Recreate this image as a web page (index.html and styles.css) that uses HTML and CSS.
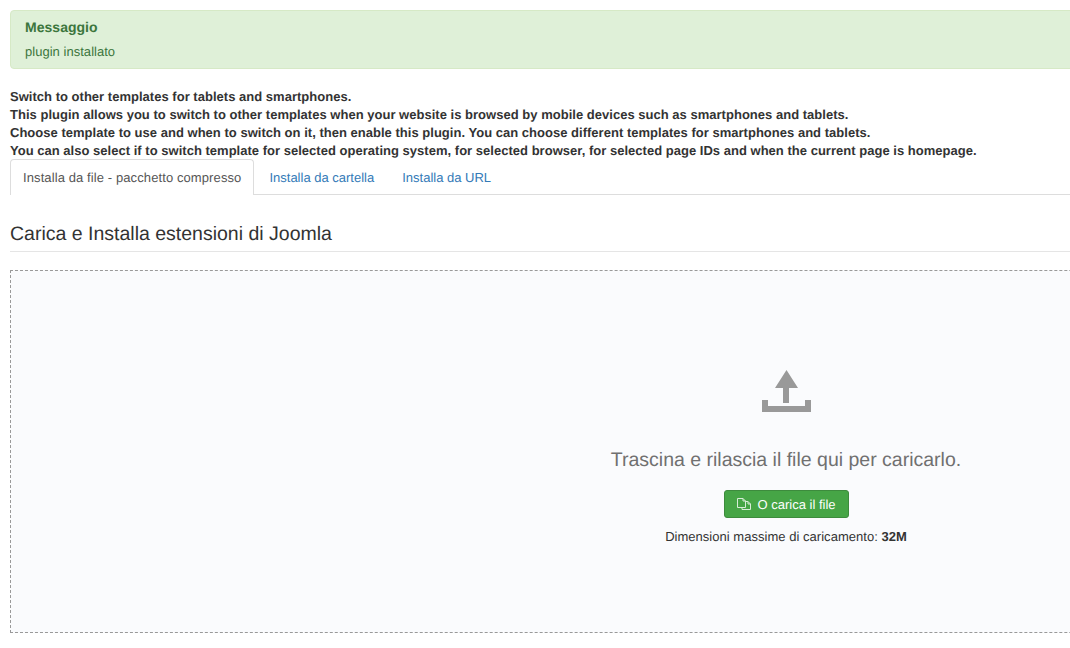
FILE: index.html
```html
<!DOCTYPE html>
<html lang="it">
<head>
    <meta charset="UTF-8">
    <meta name="viewport" content="width=device-width, initial-scale=1.0">
    <title>Installa estensioni</title>
    <link rel="stylesheet" href="styles.css">
</head>
<body>
    <div class="page">
        <div class="alert">
            <h4>Messaggio</h4>
            <p>plugin installato</p>
        </div>

        <div class="plugin-desc">
            Switch to other templates for tablets and smartphones.<br>
            This plugin allows you to switch to other templates when your website is browsed by mobile devices such as smartphones and tablets.<br>
            Choose template to use and when to switch on it, then enable this plugin. You can choose different templates for smartphones and tablets.<br>
            You can also select if to switch template for selected operating system, for selected browser, for selected page IDs and when the current page is homepage.
        </div>

        <ul class="tabs">
            <li class="tab active"><a href="#">Installa da file - pacchetto compresso</a></li>
            <li class="tab"><a href="#">Installa da cartella</a></li>
            <li class="tab"><a href="#">Installa da URL</a></li>
        </ul>

        <h3 class="section-title">Carica e Installa estensioni di Joomla</h3>

        <div class="dropzone">
            <svg class="upload-icon" width="50" height="43" viewBox="0 0 50 43">
                <path d="M25.5 0 L37 18 L28 18 L28 33 L22 33 L22 18 L14 18 Z" fill="#999"/>
                <path d="M1 30 L7 30 L7 36 L44 36 L44 30 L50 30 L50 42 L1 42 Z" fill="#999"/>
            </svg>
            <p class="drop-text">Trascina e rilascia il file qui per caricarlo.</p>
            <button class="btn-upload">
                <svg class="btn-icon" width="14" height="12" viewBox="0 0 14 12" fill="none" stroke="#d8ecd8" stroke-width="1">
                    <path d="M0.5 0.5 H6 L8.5 3 V9.5 H0.5 Z"/>
                    <path d="M8.5 3.5 H11 L13.5 6 V11.5 H5 V9.5"/>
                    <path d="M6 0.5 V3 H8.5"/>
                    <path d="M11 3.5 V6 H13.5"/>
                </svg>
                O carica il file
            </button>
            <p class="max-size">Dimensioni massime di caricamento: <strong>32M</strong></p>
        </div>
    </div>
</body>
</html>
```

FILE: styles.css
```css
html, body {
    margin: 0;
    height: 648px;
    width: 1070px;
    overflow: hidden;
}
body {
    background: #fff;
    color: #333;
    font-family: "Liberation Sans", Arial, sans-serif;
    font-size: 13px;
    line-height: 18px;
    letter-spacing: .03px;
    text-rendering: geometricPrecision;
}
.page {
    width: 1552px;
    padding: 10px 0 0 10px;
}
.alert {
    background: #dff0d8;
    border: 1px solid #d6e9c6;
    border-radius: 4px;
    color: #3c763d;
    height: 59px;
    box-sizing: border-box;
    padding: 7px 14px;
}
.alert h4 {
    margin: 0 0 7px;
    font-size: 14px;
    line-height: 18px;
    font-weight: bold;
}
.alert p {
    margin: 0;
}
.plugin-desc {
    margin-top: 18px;
    padding-top: 1px;
    height: 71px;
    font-weight: bold;
    letter-spacing: .02px;
}
.tabs {
    display: flex;
    list-style: none;
    margin: 0;
    padding: 0;
    height: 36px;
    box-sizing: border-box;
    border-bottom: 1px solid #ddd;
}
.tab a {
    display: block;
    height: 35px;
    box-sizing: border-box;
    padding: 9px 12px 0 13px;
    margin-left: 1px;
    border: 1px solid transparent;
    border-bottom: 0;
    color: #337ab7;
    letter-spacing: 0;
    text-decoration: none;
    white-space: nowrap;
}
.tab.active a {
    height: 36px;
    padding: 9px 12px 0;
    margin-left: 0;
    background: #fff;
    border-color: #ddd;
    border-radius: 4px 4px 0 0;
    color: #555;
    letter-spacing: .1px;
}
.section-title {
    margin: 26px 0 18px;
    padding: 2px 0 6px;
    border-bottom: 1px solid #e5e5e5;
    color: #333;
    font-size: 19.5px;
    line-height: 22px;
    letter-spacing: 0;
    font-weight: normal;
    height: 22px;
}
.dropzone {
    box-sizing: border-box;
    height: 363px;
    border: 1px dashed #999;
    background: #fafbfd;
    display: flex;
    flex-direction: column;
    align-items: center;
    padding-top: 99px;
}
.upload-icon {
    display: block;
}
.drop-text {
    margin: 34px 0 0;
    color: #707070;
    font-size: 19.5px;
    line-height: 26px;
    letter-spacing: 0;
}
.btn-upload {
    display: flex;
    align-items: center;
    gap: 7px;
    margin-top: 17px;
    height: 28px;
    width: 125px;
    padding: 0 12px;
    box-sizing: border-box;
    background: #46a546;
    border: 1px solid #3d8b3d;
    border-radius: 3px;
    color: #fff;
    font-family: inherit;
    font-size: 13px;
    text-rendering: inherit;
    cursor: pointer;
    white-space: nowrap;
}
.btn-icon {
    flex: none;
}
.max-size {
    margin: 10px 0 0;
    color: #333;
    font-size: 13px;
}
```
